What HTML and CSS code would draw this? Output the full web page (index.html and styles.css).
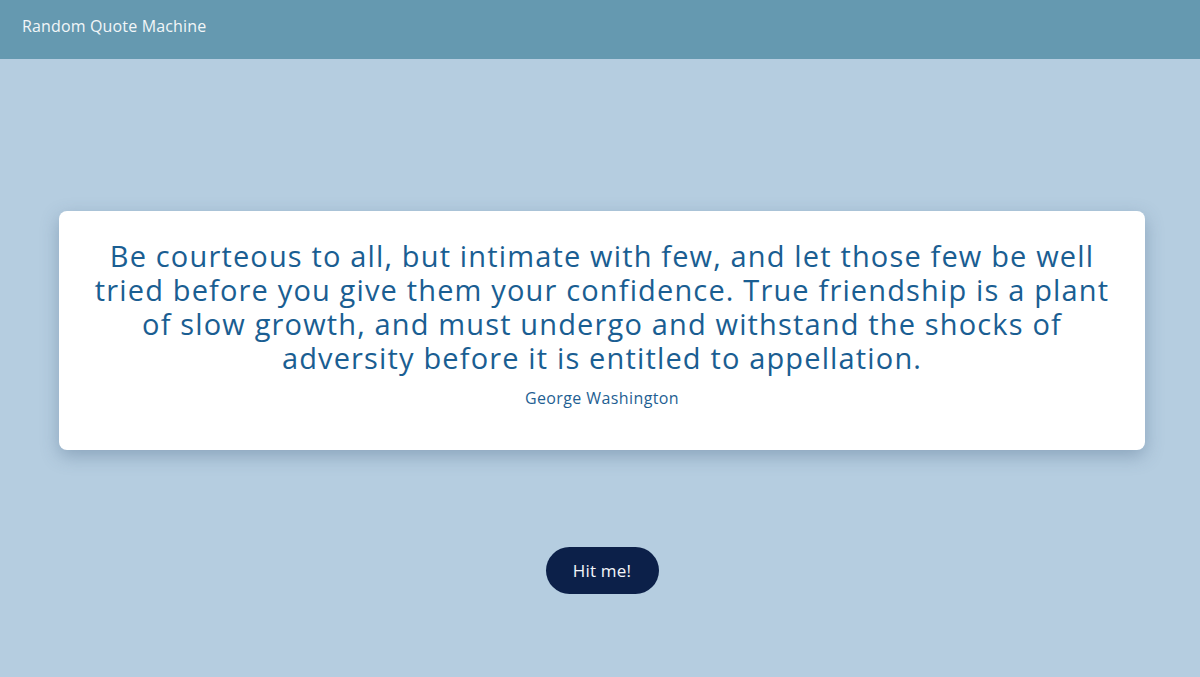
FILE: index.html
```html
<!DOCTYPE html>
<html lang="en">
<head>
<meta charset="utf-8">
<title>Random Quote Machine</title>
<link rel="stylesheet" href="styles.css">
</head>
<body>
<header class="topbar">
  <span class="brand">Random Quote Machine</span>
</header>
<main class="stage">
  <section class="card">
    <p class="quote">Be courteous to all, but intimate with few, and let those few be well tried before you give them your confidence. True friendship is a plant of slow growth, and must undergo and withstand the shocks of adversity before it is entitled to appellation.</p>
    <p class="author">George Washington</p>
  </section>
  <button class="hit">Hit me!</button>
</main>
</body>
</html>
```
FILE: styles.css
```css
* { box-sizing: border-box; }
html, body { margin: 0; padding: 0; }
body {
  width: 1200px;
  height: 677px;
  overflow: hidden;
  background: #b5cde0;
  font-family: "Open Sans", "Liberation Sans", sans-serif;
}
.topbar {
  height: 59px;
  background: #6599b0;
  display: flex;
  align-items: flex-start;
  padding: 15px 0 0 22px;
}
.brand {
  color: #f2f6f8;
  font-size: 16px;
  line-height: 22px;
  letter-spacing: 0.15px;
}
.stage {
  display: flex;
  flex-direction: column;
  align-items: center;
}
.card {
  margin-top: 152px;
  margin-left: 4px;
  width: 1086px;
  background: #ffffff;
  border-radius: 8px;
  box-shadow: 0 6px 18px rgba(60, 90, 120, 0.35);
  padding: 28px 26px 41px;
  text-align: center;
}
.quote {
  margin: 0;
  color: #1a5e92;
  font-size: 29px;
  line-height: 34px;
  letter-spacing: 1.15px;
}
.author {
  margin: 12px 0 0;
  color: #1f5f93;
  font-size: 16px;
  line-height: 22px;
  letter-spacing: 0.4px;
}
.hit {
  margin-top: 97px;
  margin-left: 4px;
  width: 113px;
  height: 47px;
  border: none;
  border-radius: 24px;
  background: #0c2049;
  color: #f4f6fa;
  font-family: "Open Sans", "Liberation Sans", sans-serif;
  font-size: 17px;
  letter-spacing: 0.2px;
}
```
